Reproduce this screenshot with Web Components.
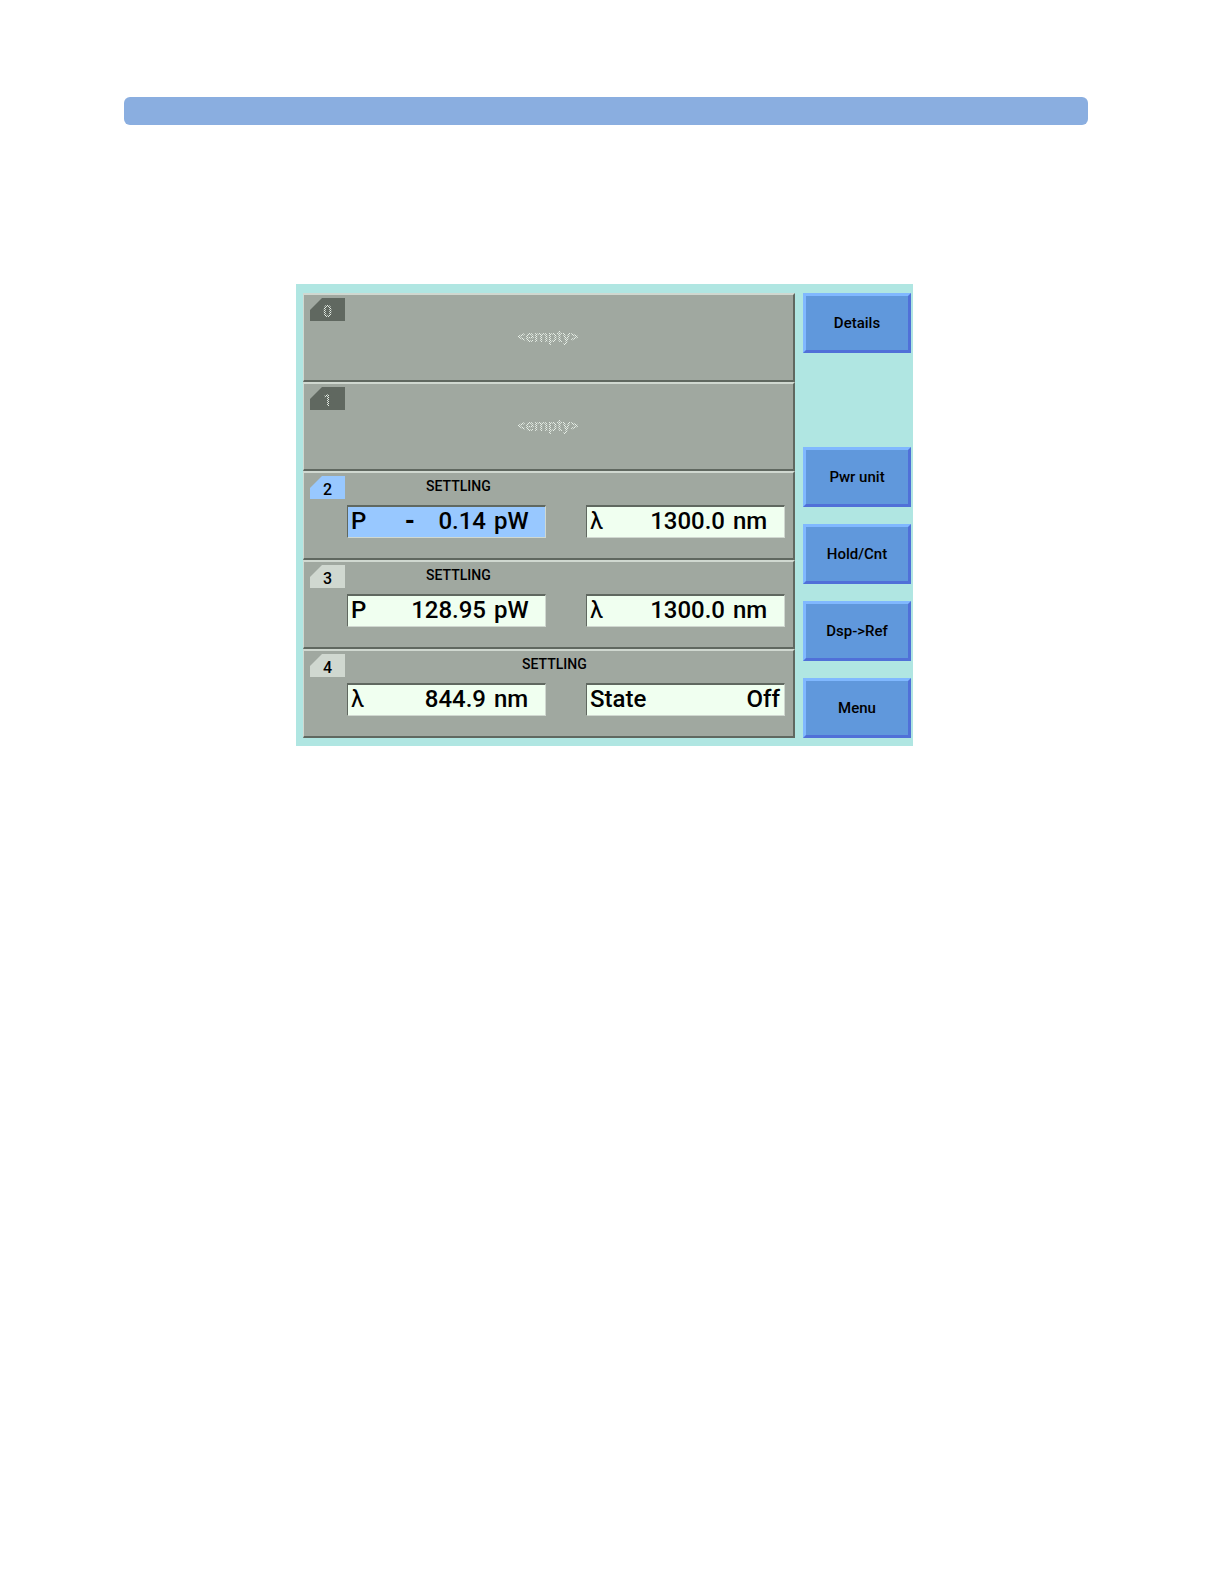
<!DOCTYPE html>
<html lang="en">
<head>
<meta charset="utf-8">
<title>Power meter</title>
<style>
  body {
    margin: 0;
    background: #ffffff;
    color: #000000;
    font-family: Roboto, "Liberation Sans", sans-serif;
  }
</style>
</head>
<body>
<manual-page>
  <instrument-screen>
    <module-slot number="0" state="empty"></module-slot>
    <module-slot number="1" state="empty"></module-slot>
    <module-slot number="2" state="active" status="SETTLING">
      <read-out label="P" sign="-" value="0.14" unit="pW" selected></read-out>
      <read-out label="λ" value="1300.0" unit="nm"></read-out>
    </module-slot>
    <module-slot number="3" status="SETTLING">
      <read-out label="P" value="128.95" unit="pW"></read-out>
      <read-out label="λ" value="1300.0" unit="nm"></read-out>
    </module-slot>
    <module-slot number="4" status="SETTLING" wide>
      <read-out label="λ" value="844.9" unit="nm"></read-out>
      <read-out label="State" value="Off"></read-out>
    </module-slot>
    <soft-key slot="keys">Details</soft-key>
    <soft-key slot="keys" blank></soft-key>
    <soft-key slot="keys">Pwr unit</soft-key>
    <soft-key slot="keys">Hold/Cnt</soft-key>
    <soft-key slot="keys">Dsp-&gt;Ref</soft-key>
    <soft-key slot="keys">Menu</soft-key>
  </instrument-screen>
</manual-page>

<script>
"use strict";

(function () {
  class ManualPage extends HTMLElement {
    constructor() {
      super();
      const shadow = this.attachShadow({ mode: "open" });
      shadow.innerHTML = `
        <style>
          :host{
            display:block;
            padding:97px 134px 97px 124px;
          }
          header{
            height:28px;
            border-radius:6px;
            background-color:#8aaee0;
          }
          main{
            margin:159px 175px 0 172px;
          }
        </style>
        <header></header>
        <main><slot></slot></main>
      `;
    }
  }

  class InstrumentScreen extends HTMLElement {
    constructor() {
      super();
      const shadow = this.attachShadow({ mode: "open" });
      shadow.innerHTML = `
        <style>
          :host{
            display:grid;
            grid-template-columns:1fr 108px;
            column-gap:8px;
            padding:9px 2px 8px 7px;
            background-color:#b0e6e2;
          }
          .modules{
            display:flex;
            flex-direction:column;
          }
          .keys{
            display:flex;
            flex-direction:column;
            gap:17px;
          }
        </style>
        <div class="modules"><slot></slot></div>
        <nav class="keys"><slot name="keys"></slot></nav>
      `;
    }
  }

  class ModuleSlot extends HTMLElement {
    constructor() {
      super();
      const shadow = this.attachShadow({ mode: "open" });
      const number = this.getAttribute("number");
      const empty = this.getAttribute("state") === "empty";
      const body = empty
        ? `<div class="empty dither">&lt;empty&gt;</div>`
        : `<div class="body">
            <div class="status">${this.getAttribute("status")}</div>
            <div class="fields"><slot></slot></div>
          </div>`;
      shadow.innerHTML = `
        <style>
          :host{
            --tab:#d0d8d0;
            display:grid;
            grid-template-columns:35px 1fr;
            column-gap:2px;
            box-sizing:border-box;
            height:89px;
            padding:3px 8px 0 6px;
            border:2px solid;
            border-color:#d0d8d0 #606860 #606860 #d0d8d0;
            border-left-width:1px;
            background-color:#a0a8a0;
          }
          :host([state="active"]){
            --tab:#98c8ff;
          }
          :host([state="empty"]){
            --tab:#606860;
          }
          .tab{
            height:23px;
            padding-top:4px;
            box-sizing:border-box;
            background-color:var(--tab);
            clip-path:polygon(12px 0, 100% 0, 100% 100%, 0 100%, 0 12px);
            font-size:16px;
            line-height:20px;
            font-weight:500;
            text-align:center;
          }
          .dither{
            color:#e8f0e8;
            -webkit-mask:repeating-conic-gradient(#000 0 25%, transparent 0 50%) 0 0 / 2px 2px;
            mask:repeating-conic-gradient(#000 0 25%, transparent 0 50%) 0 0 / 2px 2px;
          }
          .empty{
            padding:29px 36px 0 0;
            font-size:16px;
            line-height:20px;
            font-weight:500;
            text-align:center;
          }
          .status{
            height:29px;
            padding-left:79px;
            font-size:14px;
            line-height:20px;
            font-weight:500;
          }
          :host([wide]) .status{
            padding-left:175px;
          }
          .fields{
            display:grid;
            grid-template-columns:1fr 1fr;
            column-gap:40px;
          }
        </style>
        <div class="tab"><span class="${empty ? "dither" : ""}">${number}</span></div>
        ${body}
      `;
    }
  }

  class ReadOut extends HTMLElement {
    constructor() {
      super();
      const shadow = this.attachShadow({ mode: "open" });
      const label = this.getAttribute("label");
      const sign = this.getAttribute("sign");
      const unit = this.getAttribute("unit");
      shadow.innerHTML = `
        <style>
          :host{
            display:flex;
            box-sizing:border-box;
            height:33px;
            padding:0 4px 0 3px;
            border:1px solid;
            border-color:#606860 #d0d8d0 #d0d8d0 #606860;
            border-top-width:2px;
            background-color:#f0fff0;
            font-size:24px;
            line-height:29px;
            font-weight:500;
          }
          :host([selected]){
            background-color:#98c8ff;
          }
          .greek{
            font-weight:400;
          }
          output{
            flex:1;
            display:flex;
            justify-content:flex-end;
          }
          .sign{
            width:34px;
            font-weight:900;
          }
          .unit{
            width:55px;
            padding-left:8px;
            box-sizing:border-box;
            flex:none;
          }
        </style>
        <label for="value" class="${label === "λ" ? "greek" : ""}">${label}</label>
        <output id="value">
          ${sign ? `<span class="sign">${sign}</span>` : ""}
          <span>${this.getAttribute("value")}</span>
          ${unit ? `<span class="unit">${unit}</span>` : ""}
        </output>
      `;
    }
  }

  class SoftKey extends HTMLElement {
    constructor() {
      super();
      const shadow = this.attachShadow({ mode: "open" });
      shadow.innerHTML = `
        <style>
          :host{
            display:block;
            height:60px;
          }
          button{
            width:100%;
            height:100%;
            padding:0;
            border:3px solid;
            border-color:#80b8ff #5070d8 #5070d8 #80b8ff;
            background-color:#6098dc;
            color:#000000;
            font-family:inherit;
            font-size:15px;
            line-height:20px;
            font-weight:500;
          }
        </style>
        ${this.hasAttribute("blank") ? "" : "<button type=\"button\"><slot></slot></button>"}
      `;
    }
  }

  customElements.define("manual-page", ManualPage);
  customElements.define("instrument-screen", InstrumentScreen);
  customElements.define("module-slot", ModuleSlot);
  customElements.define("read-out", ReadOut);
  customElements.define("soft-key", SoftKey);
})();
</script>
</body>
</html>
